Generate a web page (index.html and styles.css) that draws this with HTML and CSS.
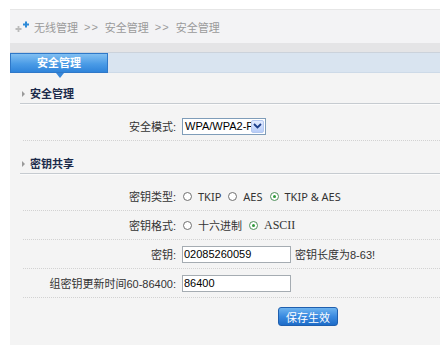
FILE: index.html
```html
<!DOCTYPE html>
<html lang="zh-CN">
<head>
    <meta charset="UTF-8">
    <title>安全管理</title>
    <link rel="stylesheet" href="styles.css">
</head>
<body>
    <div class="panel">
        <!-- ruta de navegación -->
        <div class="crumb">
            <svg class="crumb-icon" width="15" height="12" viewBox="0 0 15 12">
                <path d="M3.5 5v6M0.5 8h6" stroke="#bbbbbb" stroke-width="1.8"/>
                <path d="M11 0.5v6M8 3.5h6" stroke="#2d8ad8" stroke-width="2"/>
            </svg>
            <span>无线管理</span>
            <span class="sep">&gt;&gt;</span>
            <span>安全管理</span>
            <span class="sep">&gt;&gt;</span>
            <span>安全管理</span>
        </div>
        <div class="band"></div>
        <div class="tabbar">
            <div class="tab">安全管理</div>
        </div>

        <div class="content">
            <h3 class="sec">安全管理</h3>
            <div class="row first">
                <label>安全模式:</label>
                <div class="select">
                    <span class="select-text">WPA/WPA2-PSK</span>
                    <span class="select-arrow">
                        <svg width="9" height="6" viewBox="0 0 9 6"><path d="M1 1l3.5 3.5L8 1" fill="none" stroke="#1d3f8a" stroke-width="1.8"/></svg>
                    </span>
                </div>
            </div>

            <h3 class="sec sec2">密钥共享</h3>
            <div class="row first">
                <label>密钥类型:</label>
                <div class="radios">
                    <span class="radio"></span><span class="opt">TKIP</span>
                    <span class="radio"></span><span class="opt">AES</span>
                    <span class="radio on"></span><span class="opt">TKIP &amp; AES</span>
                </div>
            </div>
            <div class="row">
                <label>密钥格式:</label>
                <div class="radios">
                    <span class="radio"></span><span class="opt">十六进制</span>
                    <span class="radio on"></span><span class="opt ascii">ASCII</span>
                </div>
            </div>
            <div class="row">
                <label>密钥:</label>
                <div class="field">
                    <input type="text" value="02085260059">
                    <span class="hint">密钥长度为8-63!</span>
                </div>
            </div>
            <div class="row">
                <label>组密钥更新时间60-86400:</label>
                <div class="field">
                    <input type="text" value="86400">
                </div>
            </div>

            <div class="actions">
                <button class="btn">保存生效</button>
            </div>
        </div>
    </div>
</body>
</html>
```

FILE: styles.css
```css
/* base */
body {
    margin: 0;
    background: #fff;
    font-family: "Liberation Sans", "Noto Sans CJK SC", sans-serif;
    font-size: 11px;
    color: #333;
}

.panel {
    margin: 9px 2px 0 10px;
    background: #f4f4f4;
    min-height: 336px;
}

/* ruta */
.crumb {
    height: 33px;
    border-top: 1px solid #e6e6e6;
    background: #f3f3f5;
    display: flex;
    align-items: center;
    padding-left: 5px;
    color: #9a9a9a;
    font-size: 11px;
}

.crumb-icon {
    margin-right: 4px;
}

.crumb .sep {
    margin: 0 6px;
    letter-spacing: 1px;
}

.band {
    height: 9px;
    background: #e4e4e6;
}

/* pestañas */
.tabbar {
    height: 20px;
    border-top: 1px solid #cbd2db;
    background: #d9e4f0;
    box-shadow: inset 0 -1px 0 #cddae8;
}

.tab {
    position: relative;
    width: 96px;
    height: 18px;
    line-height: 18px;
    border: 1px solid #2f78c8;
    background: linear-gradient(#82c0f2, #4a9be6 55%, #2f84da);
    color: #fff;
    font-weight: bold;
    text-align: center;
    font-size: 11px;
}

.tab::after {
    content: "";
    position: absolute;
    left: 45px;
    bottom: -6px;
    border-left: 4px solid transparent;
    border-right: 4px solid transparent;
    border-top: 5px solid #3787d9;
}

/* contenido */
.content {
    padding: 12px 0 0 10px;
}

.sec {
    margin: 0;
    height: 18px;
    line-height: 18px;
    border-bottom: 1px solid #c6cbd0;
    box-shadow: 0 1px 0 #fbfbfb;
    display: flex;
    align-items: center;
    font-size: 11px;
    color: #1c2b4a;
}

.sec::before {
    content: "";
    width: 0;
    height: 0;
    margin: 0 5px 0 2px;
    border-top: 3px solid transparent;
    border-bottom: 3px solid transparent;
    border-left: 3px solid #9a9a9a;
}

.sec2 {
    margin-top: 14px;
}

.row {
    display: grid;
    grid-template-columns: 153px 1fr;
    column-gap: 6px;
    align-items: center;
    height: 28px;
    margin-left: 3px;
    border-bottom: 1px dotted #d2d2d2;
}

.row.first {
    margin-top: 8px;
}

.row label {
    text-align: right;
    color: #333;
}

/* select */
.select {
    display: flex;
    align-items: center;
    width: 84px;
    height: 17px;
    box-sizing: border-box;
    border: 1px solid #7f9db9;
    background: #fff;
    overflow: hidden;
}

.select-text {
    flex: 1;
    overflow: hidden;
    white-space: nowrap;
    padding-left: 2px;
    font-size: 11px;
    color: #000;
}

.select-arrow {
    width: 13px;
    height: 13px;
    margin-right: 1px;
    display: flex;
    align-items: center;
    justify-content: center;
    background: linear-gradient(#e2ebfe, #b8cdf8);
    border: 1px solid #b4c8f0;
    box-sizing: border-box;
    border-radius: 2px;
}

/* radios */
.radios {
    display: flex;
    align-items: center;
}

.radio {
    width: 9px;
    height: 9px;
    box-sizing: border-box;
    border: 1px solid #707070;
    border-radius: 50%;
    background: #fff;
    margin: 0 6px 0 1px;
    display: flex;
    align-items: center;
    justify-content: center;
}

.radio.on {
    border-color: #4f8f5a;
}

.radio.on::after {
    content: "";
    width: 3px;
    height: 3px;
    border-radius: 50%;
    background: #2f9a3a;
}

.opt {
    font-family: "Noto Sans", "Noto Sans CJK SC", sans-serif;
    margin-right: 6px;
    color: #333;
}

.ascii {
    font-family: "Liberation Serif", serif;
    font-size: 12px;
}

/* campos */
.field {
    display: flex;
    align-items: center;
}

.field input {
    width: 109px;
    height: 17px;
    box-sizing: border-box;
    border: 1px solid #a5acb2;
    padding: 0 1px;
    font-family: "Liberation Sans", sans-serif;
    font-size: 11px;
    color: #000;
    background: #fff;
}

.hint {
    margin-left: 4px;
    color: #333;
}

.actions {
    padding: 9px 0 0 258px;
}

.btn {
    width: 60px;
    height: 19px;
    border: 1px solid #1f5fae;
    border-radius: 3px;
    background: linear-gradient(#6db3ef, #3a8ae0 50%, #1d6cc8);
    color: #fff;
    font-family: "Liberation Sans", "Noto Sans CJK SC", sans-serif;
    font-size: 11px;
    padding: 0;
    cursor: pointer;
}
```
